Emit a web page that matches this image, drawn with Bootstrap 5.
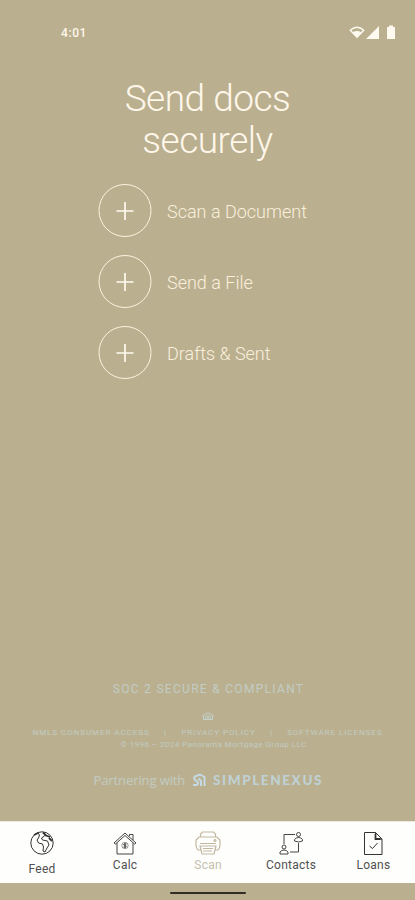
<!DOCTYPE html>
<html lang="en">
<head>
<meta charset="utf-8">
<meta name="viewport" content="width=device-width, initial-scale=1">
<title>Send docs securely</title>
<link href="https://cdn.jsdelivr.net/npm/bootstrap@5.3.0/dist/css/bootstrap.min.css" rel="stylesheet">
<style>
body{background:#bab090;color:#fff7ea;font-family:Roboto,"Liberation Sans",sans-serif;height:900px;overflow:hidden}
svg{display:block;flex:none}
.status{height:66px;padding:0 17px 0 61px}
.clock{font-size:12px;font-weight:500;letter-spacing:.6px;line-height:18px}
.title{font-size:37px;font-weight:300;line-height:42px;letter-spacing:-.5px;margin-top:12px;width:200px}
.actions{margin:22px 0 0 98px;gap:18px}
.action{gap:15px;color:#fbefdc;font-size:18px;font-weight:300;line-height:24px;height:53px}
.action span{padding-top:3px}
.legal{color:#c2cbc1;line-height:12px;margin-top:auto;height:140px;white-space:nowrap}
.soc{font-size:12px;letter-spacing:1.3px;line-height:16px;padding-left:2px;color:#c2ccc4}
.seal{margin-top:15px}
.links{font-size:8px;letter-spacing:.95px;height:12px;margin-top:6px;width:350px}
.copy{font-size:8px;letter-spacing:.45px;padding-left:12px}
.partner{font-size:13px;line-height:18px;margin-top:20px;width:228px;font-family:"Open Sans",sans-serif;font-weight:400;letter-spacing:-.1px}
.brand{font-family:Lato,sans-serif;font-size:13.5px;font-weight:900;letter-spacing:1.6px;margin-right:-1.6px;color:#c0d1d4}
.tabs{background:#fefefd;height:62px;color:#444;font-size:12px;line-height:16px;border-top:1px solid #eee9dd}
.tab{padding-top:8px;gap:1px;letter-spacing:.25px;color:#505050}
.tab.first{gap:5px}
.tab.current{color:#c5bfae}
.w-wide{width:20.3%}
.w-slim{width:19.7%}
.w-last{width:20%}
.home{height:17px}
.home span{width:76px;height:2px;margin-top:2px;background:#302c25;border-radius:1px}
</style>
<script src="https://cdn.jsdelivr.net/npm/bootstrap@5.3.0/dist/js/bootstrap.bundle.min.js"></script>
</head>
<body class="d-flex flex-column">
<header class="status d-flex justify-content-between align-items-center">
  <span class="clock">4:01</span>
  <svg width="49" height="18" viewBox="0 0 49 18" fill="#fffaf0"><path d="M1.300 6.200Q8 .2 14.700 6.200L8 13.200Z" fill="none" stroke="#fffaf0" stroke-width="1.400"/><path d="M3.800 8.200Q8 6 12.200 8.200L8 13.500Z"/><path d="M17 15 30 2v13ZM38 3h2V1.500h4V3h2v12h-8Z"/></svg>
</header>
<main class="d-flex flex-column flex-grow-1">
  <h1 class="title mx-auto mb-0 text-center">Send docs securely</h1>
  <div class="actions d-flex flex-column">
    <div class="action d-flex align-items-center"><svg width="54" height="53" viewBox="0 0 54 53" fill="none" stroke="#fff0dc"><circle cx="27" cy="26.500" r="26"/><path d="M18.500 27h17M27 18v18" stroke="#fffaf0" stroke-width="1.700"/></svg><span>Scan a Document</span></div>
    <div class="action d-flex align-items-center"><svg width="54" height="53" viewBox="0 0 54 53" fill="none" stroke="#fff0dc"><circle cx="27" cy="26.500" r="26"/><path d="M18.500 27h17M27 18v18" stroke="#fffaf0" stroke-width="1.700"/></svg><span>Send a File</span></div>
    <div class="action d-flex align-items-center"><svg width="54" height="53" viewBox="0 0 54 53" fill="none" stroke="#fff0dc"><circle cx="27" cy="26.500" r="26"/><path d="M18.500 27h17M27 18v18" stroke="#fffaf0" stroke-width="1.700"/></svg><span>Drafts &amp; Sent</span></div>
  </div>
  <footer class="legal d-flex flex-column align-items-center">
    <div class="soc">SOC 2 SECURE &amp; COMPLIANT</div>
    <svg class="seal" width="12" height="9" viewBox="0 0 12 9" fill="none" stroke="#c5d2cd"><path d="M.5 3.500 6 .8l5.500 2.700M1.500 4v3.500h9V4M3 4.200h6M3 6h6"/></svg>
    <div class="links d-flex justify-content-between"><span>NMLS CONSUMER ACCESS</span><span>|</span><span>PRIVACY POLICY</span><span>|</span><span>SOFTWARE LICENSES</span></div>
    <div class="copy">© 1996 – 2024 Panorama Mortgage Group LLC</div>
    <div class="partner d-flex justify-content-between align-items-center"><span>Partnering with</span><svg width="13" height="14" viewBox="0 0 13 14" fill="none" stroke="#c3d9e3" stroke-width="2"><path d="M0 12h3.500Q6.500 10.500 4 8.500L2 7Q0 4.500 3 3L7 1.500 11.500 4v9M8 13V8L5.500 5.500"/></svg><span class="brand">SIMPLENEXUS</span></div>
  </footer>
</main>
<nav class="tabs d-flex">
  <div class="tab first w-wide d-flex flex-column align-items-center"><svg width="26" height="26" viewBox="0 0 26 26" fill="none" stroke="#333"><circle cx="13" cy="13" r="11.200"/><path d="m9 3 1.500 2-1 3L8 10l1.500 3 4 1 1 3-.5 4 2 1 2-4 2-3-1.500-4-5-1-1-2 3-2 1-2"/><path d="M14 2.500l3 3 4 1.500M20 8l3 3M5 5l4-2" stroke-width="1.800"/></svg><span>Feed</span></div>
  <div class="tab w-slim d-flex flex-column align-items-center"><svg width="26" height="26" viewBox="0 0 26 26" fill="none" stroke="#444"><path d="m2 13 11-10 11 10-1.500 1L13 5.500 3.500 14ZM5 13v11h16V13M17.500 6V4.500H21V10"/><circle cx="13" cy="15.500" r="3.200" stroke="#999"/><path d="M14.500 14h-2.300q-1.500 1 .8 1.500t.7 1.700h-2.200M13 13v5"/></svg><span>Calc</span></div>
  <div class="tab current w-wide d-flex flex-column align-items-center"><svg width="26" height="26" viewBox="0 0 26 26" fill="none" stroke="#c1b89f" stroke-width="1.200"><path d="M5.500 6.500V4l2-2h11l2 2v2.500M5.500 20H3q-2-2-2-5V10l3-3h18l3 3v5q0 3-2 5h-2.500M5 16h16l-2 8H7ZM5 13.500h16M8 18.500h10M8 21h9"/><circle cx="20" cy="10.500" r="1"/></svg><span>Scan</span></div>
  <div class="tab w-slim d-flex flex-column align-items-center"><svg width="26" height="26" viewBox="0 0 26 26" fill="none" stroke="#444"><path d="M6 14V4.500h11M20.500 13v9H12"/><circle cx="20.500" cy="4.500" r="2"/><path d="M16.500 11V9.500q1.500-2 4-2t4 2V11q-4 2-8 0Z"/><circle cx="6" cy="17" r="2"/><path d="M2 24v-2q1.500-2 4-2t4 2v2Z"/></svg><span>Contacts</span></div>
  <div class="tab w-last d-flex flex-column align-items-center"><svg width="26" height="26" viewBox="0 0 26 26" fill="none" stroke="#333"><path d="M4.500 2.500h11l6.500 6.500v15.500H4.500ZM15.500 2.500V9H22M9.500 16l3 2.500 5-5.500"/><path d="M15.500 4v5h5" stroke-width="1.800"/></svg><span>Loans</span></div>
</nav>
<div class="home d-flex justify-content-center align-items-center"><span></span></div>
</body>
</html>
